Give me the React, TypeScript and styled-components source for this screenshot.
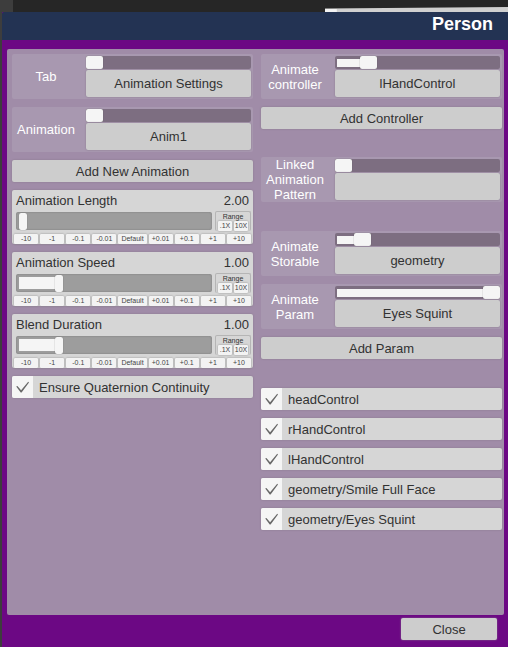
import React, { useId, useState } from "react";
import styled, { createGlobalStyle } from "styled-components";

const GlobalStyle = createGlobalStyle`
  *, *::before, *::after { box-sizing: border-box; }
  body {
    margin: 0;
    background: #3d3d3d;
    color: #323232;
    font: 13px/15px "Liberation Sans", Arial, sans-serif;
  }
  button, input { font: inherit; color: inherit; margin: 0; }
`;

const Screen = styled.div`
  display: flex;
  flex-direction: column;
  min-height: 100vh;
`;

const Backdrop = styled.div`
  display: flex;
  justify-content: flex-end;
  align-items: flex-end;
  height: 12px;
  margin-left: 13px;
  background: #262626;
`;

const LightEdge = styled.svg`
  display: block;
  width: 37%;
  height: 5px;
`;

const Window = styled.main`
  display: flex;
  flex: 1;
  flex-direction: column;
  margin-left: 2px;
  background: #6c0884;
`;

const TitleBar = styled.header`
  height: 28px;
  padding-right: 15px;
  border-radius: 2px 0 0 0;
  background: #233353;
`;

const Title = styled.h1`
  margin: 0;
  color: #fff;
  font-size: 18px;
  line-height: 25px;
  text-align: right;
`;

const Panel = styled.div`
  display: grid;
  flex: 1;
  grid-template-columns: 1fr 1fr;
  gap: 8px;
  margin: 9px 4px 0 5px;
  padding: 5px 2px 5px 5px;
  border-radius: 2px;
  background: #a08ca8;
`;

const Column = styled.section`
  display: flex;
  flex-direction: column;
  gap: 8px;
  min-width: 0;
`;

const Group = styled.div<{ $before?: number }>`
  display: flex;
  flex-direction: column;
  gap: 8px;
  margin-top: ${(p) => p.$before ?? 0}px;
`;

const Button = styled.button`
  height: 22px;
  padding: 0 8px;
  border: 0;
  border-radius: 2px;
  background: #cdcdcd;
  box-shadow: 0 0 2px #85758b;
`;

const Footer = styled.footer`
  display: flex;
  justify-content: flex-end;
  height: 32px;
  padding: 3px 11px 0 0;
`;

const CloseButton = styled(Button)`
  width: 96px;
`;

const Chooser = styled.div`
  display: grid;
  grid-template-columns: 68px 1fr;
  grid-template-rows: 100%;
  gap: 6px;
  height: 45px;
  padding: 2px 2px 2px 0;
  border-radius: 2px;
  background: #a898b0;
`;

const ChooserLabel = styled.label`
  display: flex;
  align-items: center;
  justify-content: center;
  color: #fff;
  text-align: center;
`;

const ChooserBody = styled.div`
  display: flex;
  flex-direction: column;
  gap: 1px;
  min-width: 0;
`;

const ChooserButton = styled(Button)`
  height: 27px;
`;

const Range = styled.input`
  display: block;
  width: 100%;
  appearance: none;
  background-repeat: no-repeat;

  &::-webkit-slider-thumb {
    appearance: none;
    border-radius: 2px;
    background: #f5f5f5;
    box-shadow: 0 0 1px #555;
  }
`;

const ChooserRange = styled(Range)`
  height: 13px;
  border-radius: 2px;
  background-color: #7d6e81;
  background-image: linear-gradient(#f5f5f5, #f5f5f5);
  background-position: 2px 3px;
  background-size: calc((100% - 17px) * var(--fill)) 8px;

  &::-webkit-slider-thumb {
    width: 17px;
    height: 13px;
  }
`;

const ValueRange = styled(Range)`
  height: 18px;
  padding: 0 3px;
  border-radius: 2px;
  background-color: #9d9d9d;
  background-image: linear-gradient(#f5f5f5, #f5f5f5);
  background-position: 3px 3px;
  background-size: calc((100% - 14px) * var(--fill)) 12px;
  box-shadow: inset 0 0 2px #777;

  &::-webkit-slider-thumb {
    width: 8px;
    height: 17px;
  }
`;

const ValueCard = styled.div`
  display: flex;
  flex-direction: column;
  height: 54px;
  padding: 3px 2px 0;
  border-radius: 2px;
  background: #d6d6d6;
  box-shadow: 0 0 2px #85758b;
`;

const ValueHead = styled.div`
  display: flex;
  justify-content: space-between;
  height: 18px;
  padding: 0 2px;
`;

const ValueRow = styled.div`
  display: grid;
  grid-template-columns: 1fr 36px;
  align-items: center;
  gap: 3px;
  height: 20px;
  padding-left: 2px;
`;

const RangeBox = styled.div`
  display: grid;
  grid-template-columns: 1fr 1fr;
  grid-template-rows: 9px 10px;
  column-gap: 2px;
  height: 20px;
  padding: 0 2px;
  border: 1px solid #b5b5b5;
  border-bottom: 0;
  border-radius: 2px;
  font-size: 7px;
  line-height: 9px;
`;

const RangeCaption = styled.span`
  grid-column: 1 / -1;
  text-align: center;
`;

const TinyButton = styled.button`
  min-width: 0;
  height: 10px;
  padding: 0;
  border: 0;
  border-radius: 1px;
  background: #f3f3f3;
  box-shadow: 0 0 2px #888;
  color: #444;
  font-size: 7px;
  line-height: 10px;
  text-align: center;
`;

const Steps = styled.div`
  display: grid;
  grid-template-columns: repeat(4, 6fr) 7fr repeat(4, 6fr);
  gap: 2px;
  margin-top: 3px;
`;

const CheckRow = styled.label`
  display: flex;
  align-items: center;
  gap: 6px;
  height: 22px;
  border-radius: 2px;
  background: #d6d6d6;
  box-shadow: 0 0 2px #85758b;
`;

const CheckBox = styled.span`
  display: grid;
  width: 21px;
  height: 22px;
  border-radius: 2px 0 0 2px;
  background: #f5f5f5;

  > * { grid-area: 1 / 1; }
`;

const CheckInput = styled.input`
  width: 100%;
  height: 100%;
  appearance: none;

  &:not(:checked) + svg { visibility: hidden; }
`;

const CheckMark = styled.svg`
  place-self: center;
  width: 15px;
  height: 12px;
  pointer-events: none;
`;

function ChooserField({ label, value, position }: { label: string; value: string; position: number }) {
  const id = useId();
  const [pos, setPos] = useState(position);
  return (
    <Chooser>
      <ChooserLabel htmlFor={id}>{label}</ChooserLabel>
      <ChooserBody>
        <ChooserRange
          id={id}
          type="range"
          min={0}
          max={100}
          value={pos}
          onChange={(e) => setPos(Number(e.target.value))}
          style={{ "--fill": pos / 100 } as React.CSSProperties}
        />
        <ChooserButton type="button" aria-label={value ? undefined : label}>{value}</ChooserButton>
      </ChooserBody>
    </Chooser>
  );
}

const steps = ["-10", "-1", "-0.1", "-0.01", "Default", "+0.01", "+0.1", "+1", "+10"];

function ValueField({ label, value, position }: { label: string; value: string; position: number }) {
  const id = useId();
  const [pos, setPos] = useState(position);
  return (
    <ValueCard>
      <ValueHead>
        <label htmlFor={id}>{label}</label>
        <output htmlFor={id}>{value}</output>
      </ValueHead>
      <ValueRow>
        <ValueRange
          id={id}
          type="range"
          min={0}
          max={100}
          value={pos}
          onChange={(e) => setPos(Number(e.target.value))}
          style={{ "--fill": pos / 100 } as React.CSSProperties}
        />
        <RangeBox>
          <RangeCaption>Range</RangeCaption>
          <TinyButton type="button">.1X</TinyButton>
          <TinyButton type="button">10X</TinyButton>
        </RangeBox>
      </ValueRow>
      <Steps>
        {steps.map((step) => (
          <TinyButton type="button" key={step}>{step}</TinyButton>
        ))}
      </Steps>
    </ValueCard>
  );
}

function CheckField({ label }: { label: string }) {
  return (
    <CheckRow>
      <CheckBox>
        <CheckInput type="checkbox" defaultChecked />
        <CheckMark viewBox="0 0 15 12" aria-hidden="true">
          <path d="M1.2 5.6 2.4 5 6.1 9.2 13.2.8 14 1.5 6.6 11.4 5.7 11.4Z" fill="#686868" />
        </CheckMark>
      </CheckBox>
      {label}
    </CheckRow>
  );
}

const targets = ["headControl", "rHandControl", "lHandControl", "geometry/Smile Full Face", "geometry/Eyes Squint"];

export default function App() {
  return (
    <>
      <GlobalStyle />
      <Screen>
        <Backdrop>
          <LightEdge viewBox="0 0 186 5" preserveAspectRatio="none" aria-hidden="true">
            <path d="M0 1.5 186 0V5H0Z" fill="#d0d0d0" />
            <path d="M0 2H12V5H0Z" fill="#f2f2f2" />
          </LightEdge>
        </Backdrop>
        <Window>
          <TitleBar>
            <Title>Person</Title>
          </TitleBar>
          <Panel>
            <Column>
              <ChooserField label="Tab" value="Animation Settings" position={0} />
              <ChooserField label="Animation" value="Anim1" position={0} />
              <Button type="button">Add New Animation</Button>
              <ValueField label="Animation Length" value="2.00" position={0} />
              <ValueField label="Animation Speed" value="1.00" position={20} />
              <ValueField label="Blend Duration" value="1.00" position={20} />
              <CheckField label="Ensure Quaternion Continuity" />
            </Column>
            <Column>
              <Group>
                <ChooserField label="Animate controller" value="lHandControl" position={17} />
                <Button type="button">Add Controller</Button>
              </Group>
              <Group $before={20}>
                <ChooserField label="Linked Animation Pattern" value="" position={0} />
              </Group>
              <Group $before={21}>
                <ChooserField label="Animate Storable" value="geometry" position={13} />
                <ChooserField label="Animate Param" value="Eyes Squint" position={100} />
                <Button type="button">Add Param</Button>
              </Group>
              <Group $before={21}>
                {targets.map((target) => (
                  <CheckField key={target} label={target} />
                ))}
              </Group>
            </Column>
          </Panel>
          <Footer>
            <CloseButton type="button">Close</CloseButton>
          </Footer>
        </Window>
      </Screen>
    </>
  );
}
